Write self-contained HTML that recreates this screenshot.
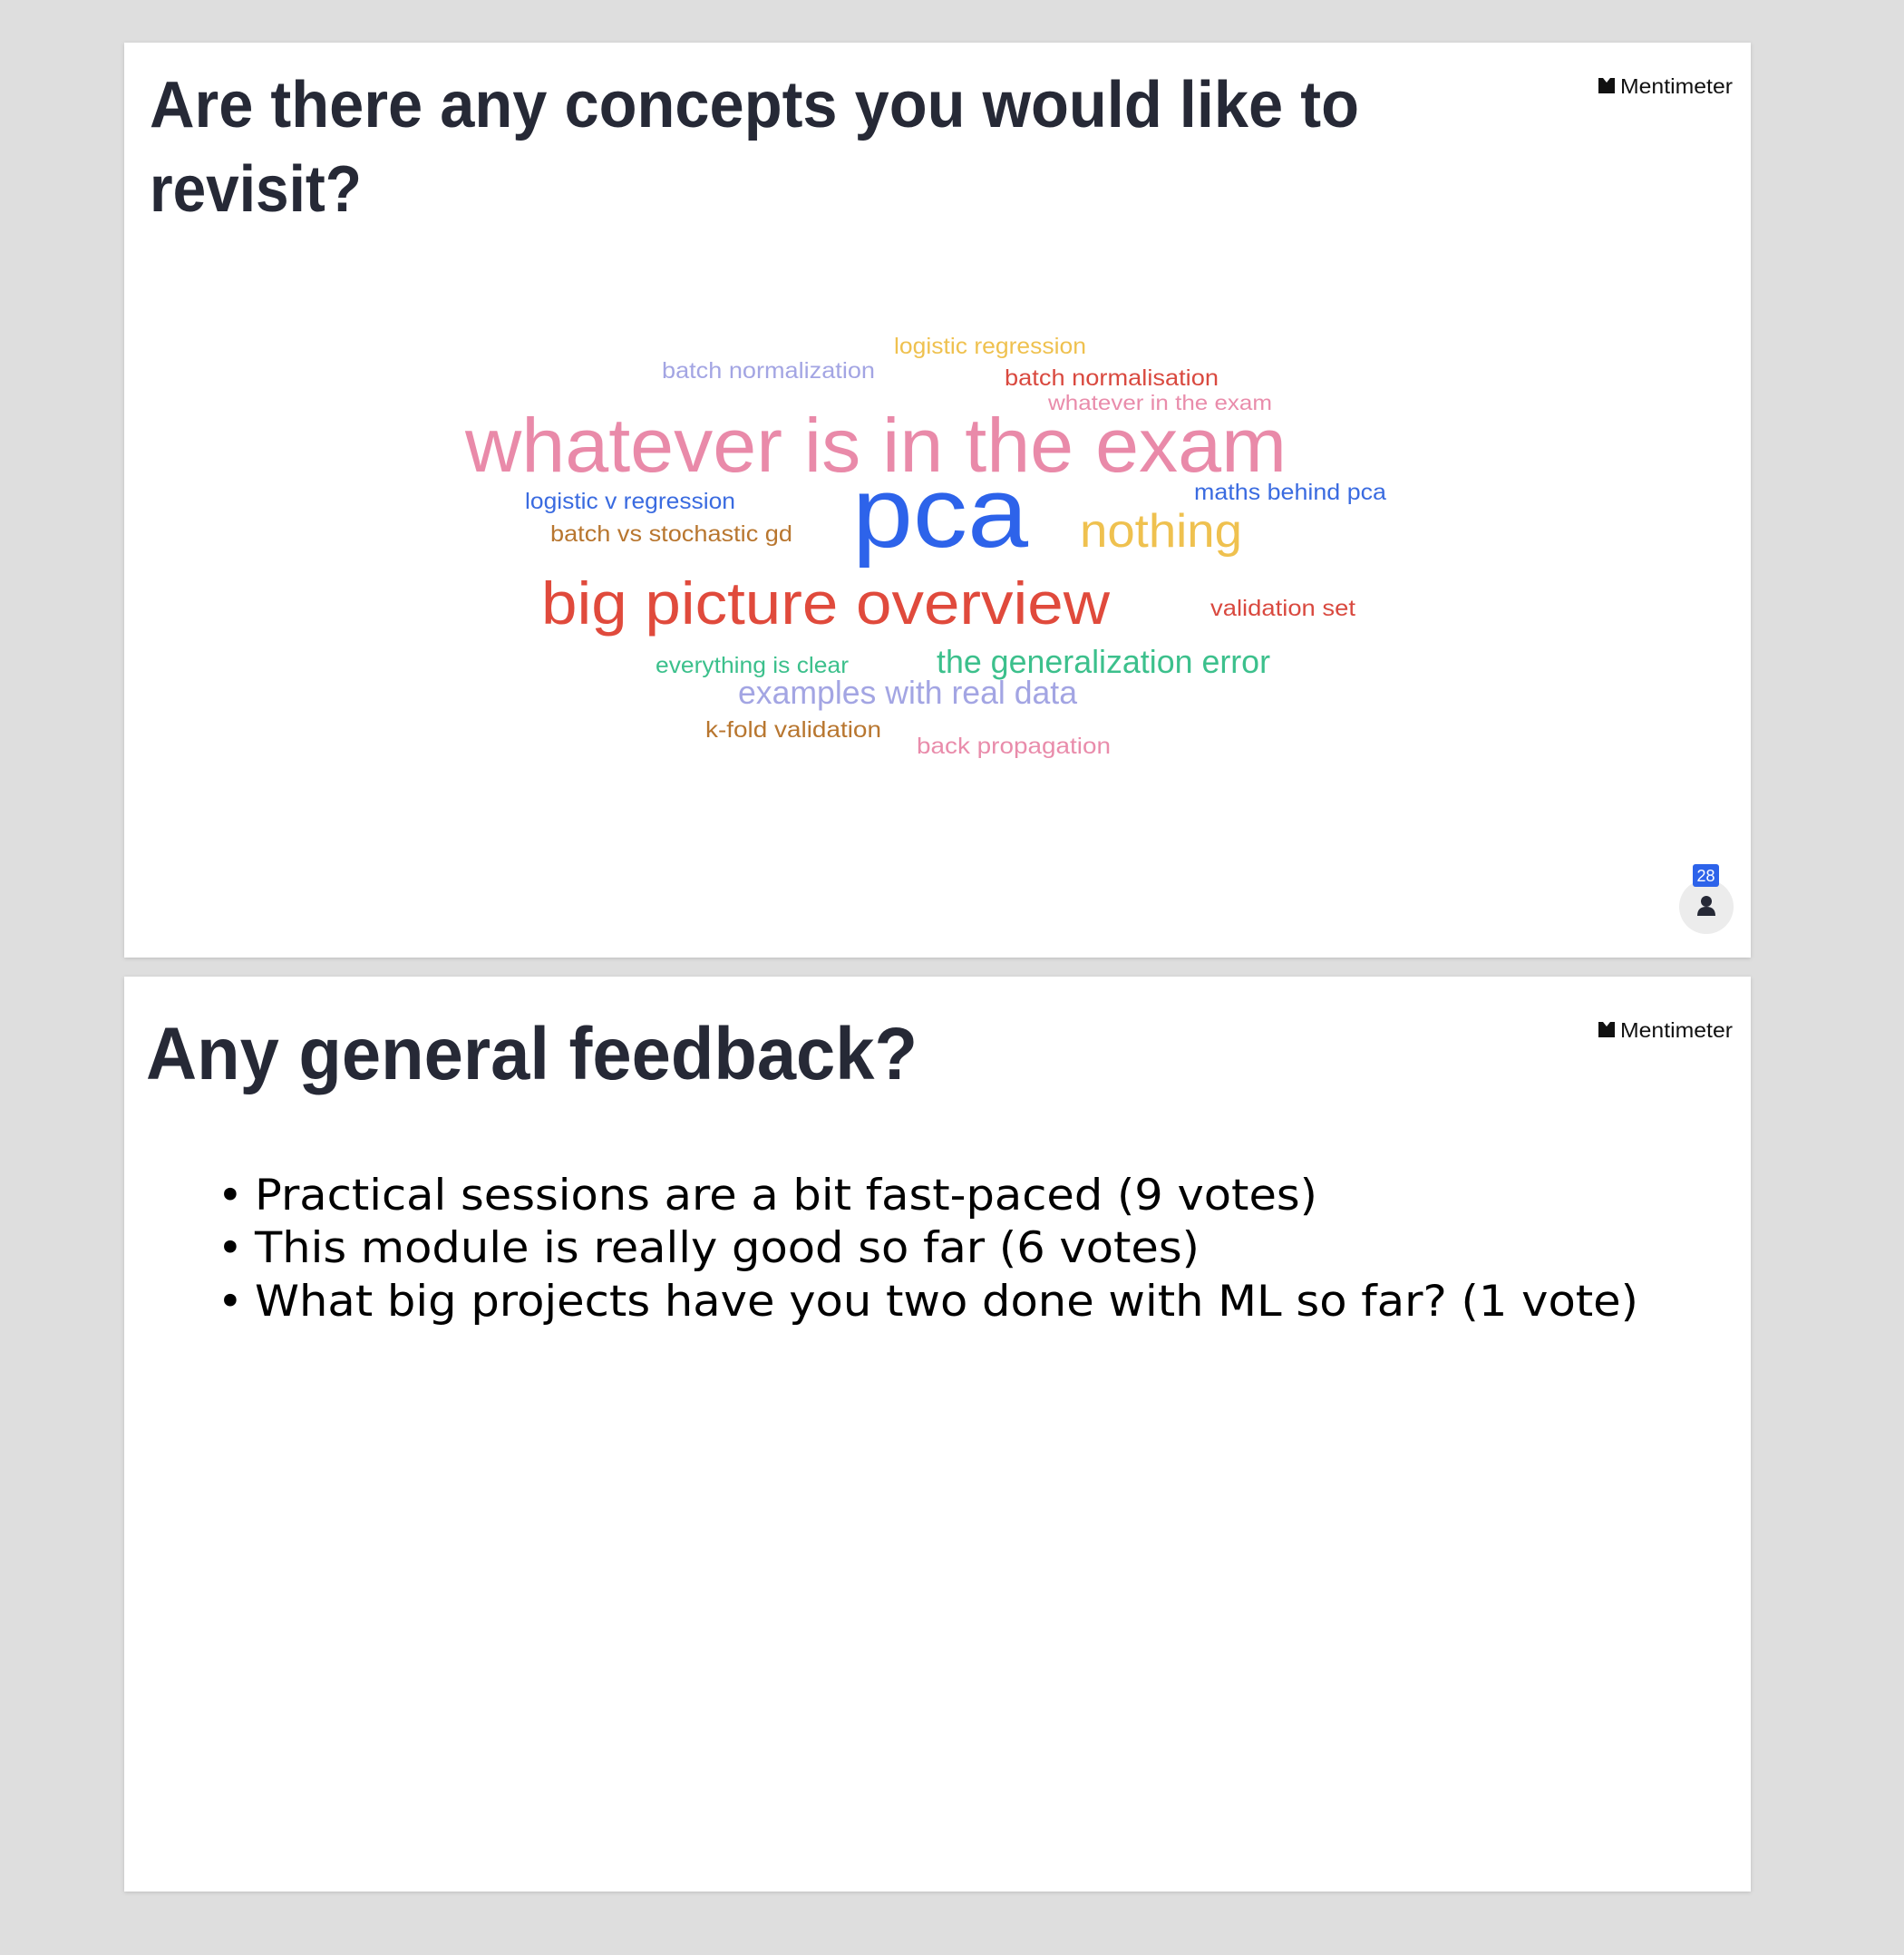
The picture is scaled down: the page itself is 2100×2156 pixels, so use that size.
<!DOCTYPE html>
<html><head><meta charset="utf-8"><style>
html,body{margin:0;padding:0;background:#dedede;}
svg{display:block}
</style></head><body>
<svg width="2100" height="2156" viewBox="0 0 2100 2156" xmlns="http://www.w3.org/2000/svg">
<defs>
<filter id="sh" x="-2%" y="-2%" width="104%" height="104%"><feDropShadow dx="0" dy="1" stdDeviation="2" flood-color="#000" flood-opacity="0.15"/></filter>
</defs>
<rect width="2100" height="2156" fill="#dedede"/>
<rect x="137" y="47" width="1794" height="1009" fill="#fff" filter="url(#sh)"/>
<rect x="137" y="1077" width="1794" height="1009" fill="#fff" filter="url(#sh)"/>

<g font-family="Liberation Sans, sans-serif" fill="#262936" font-weight="bold">
<text x="165" y="140" font-size="72" textLength="1334" lengthAdjust="spacingAndGlyphs">Are there any concepts you would like to</text>
<text x="165" y="233" font-size="72" textLength="234" lengthAdjust="spacingAndGlyphs">revisit?</text>
<text x="161" y="1190" font-size="82" textLength="851" lengthAdjust="spacingAndGlyphs">Any general feedback?</text>
</g>

<g fill="#111">
<path d="M1763 86 h5 l4 5 l4 -5 h5 v17 h-18z"/>
<text x="1787" y="103" font-family="Liberation Sans, sans-serif" font-size="23" textLength="124" lengthAdjust="spacingAndGlyphs">Mentimeter</text>
<path d="M1763 1127 h5 l4 5 l4 -5 h5 v17 h-18z"/>
<text x="1787" y="1144" font-family="Liberation Sans, sans-serif" font-size="23" textLength="124" lengthAdjust="spacingAndGlyphs">Mentimeter</text>
</g>

<g font-family="Liberation Sans, sans-serif">
<text x="986" y="390" font-size="25" fill="#efc14f" textLength="212" lengthAdjust="spacingAndGlyphs">logistic regression</text>
<text x="730" y="417" font-size="25" fill="#a3a5e3" textLength="235" lengthAdjust="spacingAndGlyphs">batch normalization</text>
<text x="1108" y="425" font-size="25" fill="#d9493f" textLength="236" lengthAdjust="spacingAndGlyphs">batch normalisation</text>
<text x="1156" y="452" font-size="23" fill="#e98cab" textLength="247" lengthAdjust="spacingAndGlyphs">whatever in the exam</text>
<text x="513" y="520" font-size="84" fill="#e98aa9" textLength="906" lengthAdjust="spacingAndGlyphs">whatever is in the exam</text>
<text x="579" y="561" font-size="25" fill="#3a6be0" textLength="232" lengthAdjust="spacingAndGlyphs">logistic v regression</text>
<text x="940" y="603" font-size="110" fill="#2d63ea" textLength="194" lengthAdjust="spacingAndGlyphs">pca</text>
<text x="1317" y="551" font-size="25" fill="#3a6be0" textLength="212" lengthAdjust="spacingAndGlyphs">maths behind pca</text>
<text x="607" y="597" font-size="25" fill="#b8762f" textLength="267" lengthAdjust="spacingAndGlyphs">batch vs stochastic gd</text>
<text x="1191" y="603" font-size="52" fill="#efc14f" textLength="179" lengthAdjust="spacingAndGlyphs">nothing</text>
<text x="597" y="688" font-size="66" fill="#e04a3c" textLength="627" lengthAdjust="spacingAndGlyphs">big picture overview</text>
<text x="1335" y="679" font-size="25" fill="#d9493f" textLength="160" lengthAdjust="spacingAndGlyphs">validation set</text>
<text x="723" y="742" font-size="25" fill="#3cc08c" textLength="213" lengthAdjust="spacingAndGlyphs">everything is clear</text>
<text x="1033" y="742" font-size="36" fill="#3cc08c" textLength="368" lengthAdjust="spacingAndGlyphs">the generalization error</text>
<text x="814" y="776" font-size="36" fill="#a3a5e3" textLength="374" lengthAdjust="spacingAndGlyphs">examples with real data</text>
<text x="778" y="813" font-size="25" fill="#b8762f" textLength="194" lengthAdjust="spacingAndGlyphs">k-fold validation</text>
<text x="1011" y="831" font-size="25" fill="#e98cab" textLength="214" lengthAdjust="spacingAndGlyphs">back propagation</text>
</g>

<circle cx="1882" cy="1000" r="30" fill="#ececec"/>
<rect x="1867" y="953" width="29" height="25" rx="3" fill="#2d63ea"/>
<text x="1881.5" y="972" font-family="Liberation Sans, sans-serif" font-size="18" fill="#fff" text-anchor="middle">28</text>
<circle cx="1882" cy="994" r="6" fill="#262936"/>
<path d="M1872 1010 q0 -10 10 -10 q10 0 10 10 z" fill="#262936"/>

<g font-family="DejaVu Sans, sans-serif" font-size="47" fill="#000">
<text x="240" y="1334">•</text>
<text x="281" y="1334" textLength="1172" lengthAdjust="spacingAndGlyphs">Practical sessions are a bit fast-paced (9 votes)</text>
<text x="240" y="1392">•</text>
<text x="281" y="1392" textLength="1042" lengthAdjust="spacingAndGlyphs">This module is really good so far (6 votes)</text>
<text x="240" y="1451">•</text>
<text x="281" y="1451" textLength="1526" lengthAdjust="spacingAndGlyphs">What big projects have you two done with ML so far? (1 vote)</text>
</g>
</svg>
</body></html>
